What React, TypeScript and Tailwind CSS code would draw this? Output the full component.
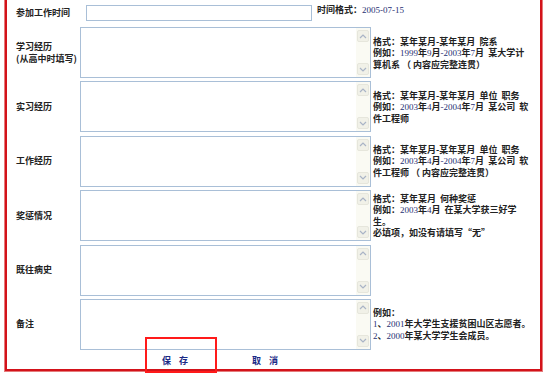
import React from "react";

const cjk = "font-['Noto_Sans_CJK_SC',_'Liberation_Sans',_sans-serif]";

function Rich({ text }: { text: string }) {
  const parts = text.split(/(-?[0-9]+(?:-[0-9]+)*)/);
  return (
    <>
      {parts.map((p, i) =>
        i % 2 ? (
          <span key={i} className="font-['Liberation_Serif',_serif] font-normal text-[#1f2f72]">
            {p}
          </span>
        ) : (
          <span key={i}>{p}</span>
        )
      )}
    </>
  );
}

function Chevron({ up }: { up?: boolean }) {
  return (
    <svg width="8" height="5" viewBox="0 0 8 5" fill="none">
      <path
        d={up ? "M1 4 L4 1 L7 4" : "M1 1 L4 4 L7 1"}
        stroke="#a9b4c6"
        strokeWidth="1.2"
      />
    </svg>
  );
}

function TextBox() {
  return (
    <div className="flex h-[51px] w-[291px] shrink-0 justify-end border border-[#a9bfd7] bg-white">
      <div className="flex w-[14px] flex-col justify-between bg-[#fafaf3] px-px py-[2px]">
        <div className="flex h-[12px] items-center justify-center rounded-[2px] border border-[#e6e6dc] bg-[#f1f1e8]">
          <Chevron up />
        </div>
        <div className="flex h-[12px] items-center justify-center rounded-[2px] border border-[#e6e6dc] bg-[#f1f1e8]">
          <Chevron />
        </div>
      </div>
    </div>
  );
}

const rows: { label: string[]; hint: string[] }[] = [
  {
    label: ["学习经历", "(从高中时填写)"],
    hint: [
      "格式：某年某月-某年某月\u00a0\u00a0院系",
      "例如：1999年9月-2003年7月\u00a0\u00a0某大学计",
      "算机系 （ 内容应完整连贯）",
    ],
  },
  {
    label: ["实习经历"],
    hint: [
      "格式：某年某月-某年某月\u00a0\u00a0单位\u00a0\u00a0职务",
      "例如：2003年4月-2004年7月\u00a0\u00a0某公司\u00a0\u00a0软",
      "件工程师",
    ],
  },
  {
    label: ["工作经历"],
    hint: [
      "格式：某年某月-某年某月\u00a0\u00a0单位\u00a0\u00a0职务",
      "例如：2003年4月-2004年7月\u00a0\u00a0某公司\u00a0\u00a0软",
      "件工程师 （ 内容应完整连贯）",
    ],
  },
  {
    label: ["奖惩情况"],
    hint: [
      "格式：某年某月\u00a0\u00a0何种奖惩",
      "例如：2003年4月\u00a0\u00a0在某大学获三好学",
      "生。",
      "必填项，如没有请填写“无”",
    ],
  },
  { label: ["既往病史"], hint: [] },
  {
    label: ["备注"],
    hint: ["例如：", "1、2001年大学生支援贫困山区志愿者。", "2、2000年某大学学生会成员。"],
  },
];

export default function App() {
  return (
    <div className={`relative h-[379px] w-[546px] overflow-hidden bg-white text-[9px] font-bold text-[#222] ${cjk}`}>
      <div className="ml-[4px] h-[372px] w-[539px] border-x border-b border-[#e57b7b]">
        <div className="flex h-full flex-col border-x-2 border-b-2 border-[#d3121a]">
          {/* first row */}
          <div className="flex h-[26px] items-center">
            <div className="w-[73px] shrink-0 pl-[9px] leading-[12px]">参加工作时间</div>
            <div className="ml-[6px] h-[16px] w-[226px] border border-[#a9bfd7] bg-white" />
            <div className="ml-[5px] -mt-[5px] whitespace-nowrap">
              <Rich text="时间格式：2005-07-15" />
            </div>
          </div>

          <div className="mt-px flex flex-col gap-[3.4px]">
            {rows.map((r) => (
              <div key={r.label[0]} className="flex h-[51px] items-center">
                <div className="w-[73px] shrink-0 pl-[9px] leading-[12px]">
                  {r.label.map((l) => (
                    <div key={l} className="whitespace-nowrap">
                      {l}
                    </div>
                  ))}
                </div>
                <TextBox />
                <div className="ml-[2px] leading-[11px]">
                  {r.hint.map((h) => (
                    <div key={h} className="whitespace-nowrap">
                      <Rich text={h} />
                    </div>
                  ))}
                </div>
              </div>
            ))}
          </div>

          <div className="flex flex-1 items-center pt-[3px] text-[#1b2a86]">
            <span className="ml-[155px] tracking-[3px]">保 存</span>
            <span className="ml-[61px] tracking-[3px]">取 消</span>
          </div>
        </div>
      </div>

      <div className="absolute left-[145px] top-[337px] h-[36px] w-[72px] border-2 border-[#ff1a1a]" />
    </div>
  );
}
